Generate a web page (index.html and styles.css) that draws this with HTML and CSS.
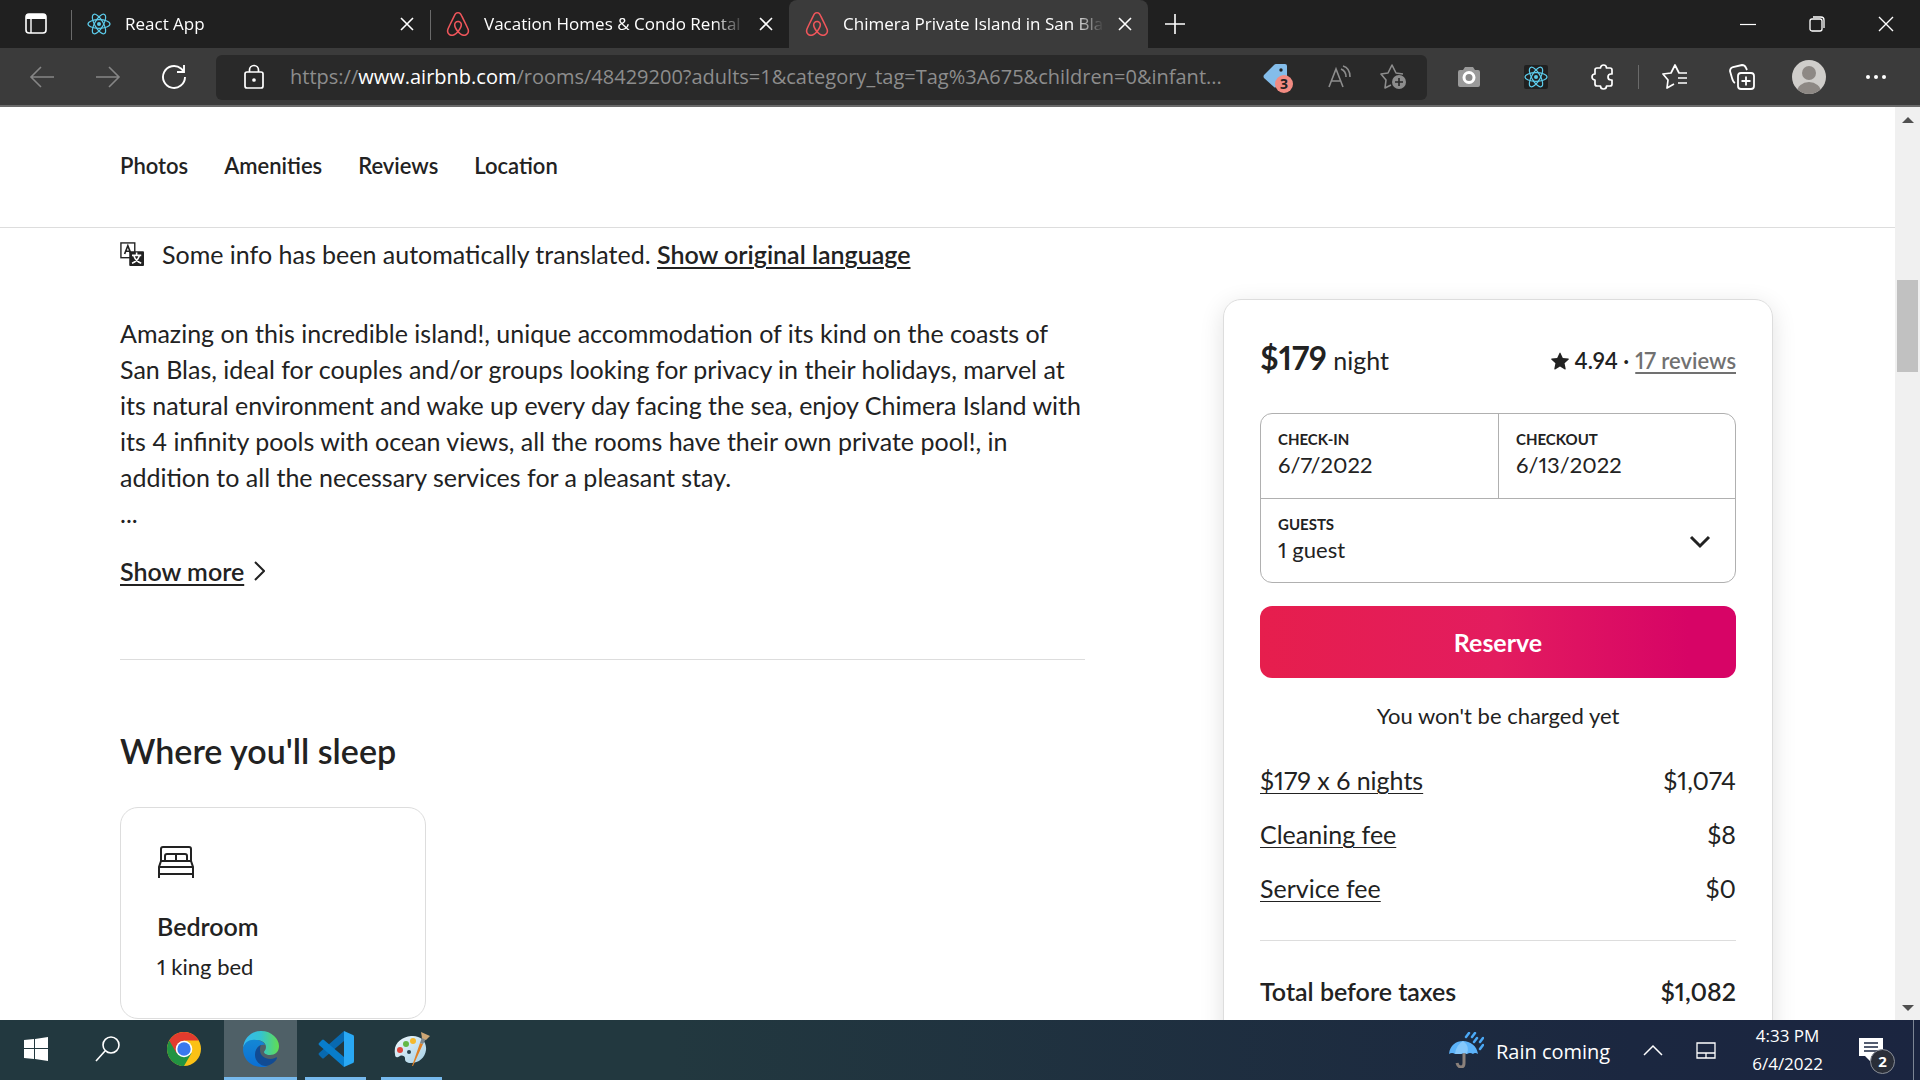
FILE: index.html
```html
<!DOCTYPE html>
<html lang="en">
<head>
<meta charset="utf-8">
<meta name="viewport" content="width=device-width, initial-scale=1">
<title>Chimera Private Island in San Blas</title>
<link rel="stylesheet" href="styles.css">
</head>
<body>
<svg class="symbols" aria-hidden="true">
  <symbol id="react" viewBox="0 0 24 24"><g fill="none" stroke="currentColor" stroke-width="1.2"><ellipse cx="12" cy="12" rx="11" ry="4.3"/><ellipse cx="12" cy="12" rx="11" ry="4.3" transform="rotate(60 12 12)"/><ellipse cx="12" cy="12" rx="11" ry="4.3" transform="rotate(120 12 12)"/></g><circle cx="12" cy="12" r="2" fill="currentColor"/></symbol>
  <symbol id="belo" viewBox="0 0 24 24"><path fill="currentColor" d="M12.001 18.275c-1.353-1.697-2.148-3.184-2.413-4.457-.263-1.027-.16-1.848.291-2.465.477-.71 1.188-1.056 2.121-1.056s1.643.345 2.12 1.063c.446.61.558 1.432.286 2.465-.291 1.298-1.085 2.785-2.412 4.458zm9.601 1.14c-.185 1.246-1.034 2.28-2.2 2.783-2.253.98-4.483-.583-6.392-2.704 3.157-3.951 3.74-7.028 2.385-9.018-.795-1.14-1.933-1.695-3.394-1.695-2.944 0-4.563 2.49-3.927 5.382.37 1.565 1.352 3.343 2.917 5.332-.98 1.085-1.91 1.856-2.732 2.333-.636.344-1.245.558-1.828.609-2.679.399-4.778-2.2-3.825-4.88.132-.345.395-.98.845-1.961l.025-.053c1.464-3.178 3.242-6.79 5.285-10.795l.053-.132.58-1.116c.45-.822.635-1.19 1.351-1.643.346-.21.77-.315 1.246-.315.954 0 1.698.558 2.016 1.007.158.239.345.557.582.953l.558 1.089.08.159c2.041 4.004 3.821 7.608 5.279 10.794l.026.025.533 1.22.318.764c.243.613.294 1.222.213 1.858zm1.22-2.39c-.186-.583-.505-1.271-.9-2.094v-.03c-1.889-4.006-3.642-7.608-5.307-10.844l-.111-.163C15.317 1.461 14.468 0 12.001 0c-2.44 0-3.476 1.695-4.535 3.898l-.081.16c-1.669 3.236-3.421 6.843-5.303 10.847v.053l-.559 1.22c-.21.504-.317.768-.345.847C-.172 20.74 2.611 24 5.98 24c.027 0 .132 0 .265-.027h.372c1.75-.213 3.554-1.325 5.384-3.317 1.829 1.989 3.635 3.104 5.382 3.317h.372c.133.027.239.027.265.027 3.37.003 6.152-3.261 4.802-6.975z"/></symbol>
  <symbol id="close" viewBox="0 0 14 14"><path d="M1 1l12 12M13 1L1 13" fill="none" stroke="currentColor" stroke-width="1.6"/></symbol>
</svg>

<header class="chrome">
  <div class="tabbar">
    <button class="icon-button tab-actions" aria-label="Tab actions"><svg width="22" height="22" viewBox="0 0 22 22"><rect x="1" y="1" width="20" height="19" rx="3" fill="none" stroke="#fff" stroke-width="1.6"/><path d="M1 6V4a3 3 0 0 1 3-3h14a3 3 0 0 1 3 3v2z" fill="#fff"/><path d="M6 6v14" stroke="#fff" stroke-width="1.4"/></svg></button>
    <div class="tab tab-divided">
      <svg class="favicon react-color"><use href="#react"/></svg>
      <span class="tab-title">React App</span>
      <button class="icon-button" aria-label="Close React App"><svg width="14" height="14"><use href="#close"/></svg></button>
    </div>
    <div class="tab tab-divided">
      <svg class="favicon belo-color"><use href="#belo"/></svg>
      <span class="tab-title">Vacation Homes &amp; Condo Rental</span>
      <button class="icon-button" aria-label="Close Vacation Homes"><svg width="14" height="14"><use href="#close"/></svg></button>
    </div>
    <div class="tab tab-active">
      <svg class="favicon belo-color"><use href="#belo"/></svg>
      <span class="tab-title">Chimera Private Island in San Bla</span>
      <button class="icon-button" aria-label="Close Chimera Private Island"><svg width="14" height="14"><use href="#close"/></svg></button>
    </div>
    <button class="icon-button new-tab" aria-label="New tab"><svg width="22" height="22" viewBox="0 0 22 22"><path d="M11 1v20M1 11h20" stroke="#fff" stroke-width="1.6"/></svg></button>
    <div class="window-controls">
      <button class="icon-button" aria-label="Minimize"><svg width="16" height="16"><path d="M0 8.500h16" stroke="#fff" stroke-width="1.2"/></svg></button>
      <button class="icon-button" aria-label="Restore"><svg width="16" height="16" fill="none" stroke="#fff" stroke-width="1.3"><rect x="1" y="3" width="12" height="12" rx="2"/><path d="M4 1h8a3 3 0 0 1 3 3v8"/></svg></button>
      <button class="icon-button" aria-label="Close"><svg width="16" height="16"><path d="M1 1l14 14M15 1L1 15" stroke="#fff" stroke-width="1.4"/></svg></button>
    </div>
  </div>

  <div class="toolbar">
    <div class="nav-buttons">
      <button class="icon-button" aria-label="Back"><svg width="26" height="24" viewBox="0 0 26 24" fill="none" stroke="#868686" stroke-width="1.6"><path d="M25 12H2M12 2L2 12l10 10"/></svg></button>
      <button class="icon-button" aria-label="Forward"><svg width="26" height="24" viewBox="0 0 26 24" fill="none" stroke="#868686" stroke-width="1.6"><path d="M1 12h23M14 2l10 10-10 10"/></svg></button>
      <button class="icon-button" aria-label="Refresh"><svg width="26" height="26" viewBox="0 0 26 26" fill="none" stroke="#fff" stroke-width="1.9"><path d="M24 13a11 11 0 1 1-4-8.500l3 3M23 1v7h-7"/></svg></button>
    </div>
    <div class="address">
      <svg width="20" height="26" viewBox="0 0 20 26" fill="none" stroke="#fff" stroke-width="1.7"><rect x="1" y="8" width="18" height="16" rx="2"/><path d="M5.500 8V6a4.500 4.500 0 0 1 9 0v2"/><circle cx="10" cy="16" r="1" fill="#fff"/></svg>
      <span class="url">https://<b>www.airbnb.com</b>/rooms/48429200?adults=1&amp;category_tag=Tag%3A675&amp;children=0&amp;infant...</span>
      <button class="icon-button shopping" aria-label="Shopping, 3 coupons"><svg width="30" height="28" viewBox="0 0 30 28"><path d="M1 12L11 2q1-1 2-1h9q2 0 2 2v10L13 24q-1 1-2 0L1 15q-1-1.500 0-3z" fill="#84bdea"/><circle cx="18" cy="7" r="1.700" fill="#222"/></svg><span class="coupon-badge">3</span></button>
      <button class="icon-button" aria-label="Read aloud"><svg width="26" height="24" viewBox="0 0 26 24" fill="none" stroke="#8d8d8d" stroke-width="1.6"><path d="M2 22L9 4l7 18M4.500 16h9M14 4q5 2 5 8M16 1q7 2 7 11"/></svg></button>
      <button class="icon-button" aria-label="Add to favorites"><svg width="28" height="26" viewBox="0 0 28 26" fill="none" stroke="#8d8d8d" stroke-width="1.6" stroke-linejoin="round"><path d="M12 21l-6 3 1-8-5-6 7-1 4-8 4 8 7 1"/><circle cx="20" cy="18" r="7" fill="#8d8d8d" stroke="none"/><path d="M20 14v8M16 18h8" stroke="#292929"/></svg></button>
    </div>
    <div class="extensions">
      <button class="icon-button" aria-label="Screenshot extension"><svg width="24" height="22" viewBox="0 0 24 22"><path d="M1 6a2 2 0 0 1 2-2h3l2-3h8l2 3h3a2 2 0 0 1 2 2v13a2 2 0 0 1-2 2H3a2 2 0 0 1-2-2z" fill="#9a9a9a"/><circle cx="12" cy="11.500" r="5" fill="#8a8a8a" stroke="#fff" stroke-width="3"/></svg></button>
      <button class="icon-button" aria-label="React Developer Tools"><svg class="react-tile react-color"><use href="#react"/></svg></button>
      <button class="icon-button" aria-label="Extensions"><svg width="26" height="26" viewBox="0 0 26 26" fill="none" stroke="#fff" stroke-width="1.700" stroke-linejoin="round"><path d="M7 4h3.500a3 3 0 0 1 6 0H20q2 0 2 2v4h-1a3 3 0 0 0 0 6h1v4q0 2-2 2h-3.500a3 3 0 0 1-6 0H7q-2 0-2-2v-4a3 3 0 0 1 0-6V6q0-2 2-2z"/></svg></button>
      <span class="toolbar-divider"></span>
      <button class="icon-button" aria-label="Favorites"><svg width="26" height="26" viewBox="0 0 26 26" fill="none" stroke="#fff" stroke-width="1.700" stroke-linejoin="round"><path d="M12 20l-7 4 1-8-5-6 8-1 4-8 4 8h8M16 14h9M16 19h9"/></svg></button>
      <button class="icon-button" aria-label="Collections"><svg width="26" height="26" viewBox="0 0 26 26" fill="none" stroke="#fff" stroke-width="1.800"><rect x="9" y="9" width="16" height="16" rx="3"/><path d="M17 12.500v9M12.500 17h9M6 19q-2-1-3-5L1 7q0-3 3-4l9-2q3 0 4 3l1 2"/></svg></button>
      <button class="icon-button" aria-label="Profile"><svg width="34" height="34" viewBox="0 0 34 34"><clipPath id="round"><circle cx="17" cy="17" r="17"/></clipPath><g clip-path="url(#round)"><path d="M0 0h34v34H0z" fill="#cfcdca"/><circle cx="17" cy="13" r="7" fill="#8d8884"/><ellipse cx="17" cy="32" rx="12" ry="10" fill="#8d8884"/></g></svg></button>
      <button class="icon-button" aria-label="Settings and more"><svg width="22" height="6" fill="#fff"><circle cx="3" cy="3" r="2"/><circle cx="11" cy="3" r="2"/><circle cx="19" cy="3" r="2"/></svg></button>
    </div>
  </div>
</header>

<div class="viewport">
  <div class="page">
    <nav class="sections">
      <a href="#photos">Photos</a>
      <a href="#amenities">Amenities</a>
      <a href="#reviews">Reviews</a>
      <a href="#location">Location</a>
    </nav>
    <main class="listing">
      <div class="details">
        <p class="translated">
          <svg width="24" height="24" viewBox="0 0 26 26"><rect x="1" y="1" width="15" height="16" fill="#fff" stroke="#222" stroke-width="1.500"/><path d="M5 13l3.500-9L12 13M6 10h5" fill="none" stroke="#222" stroke-width="1.800"/><rect x="10" y="10" width="16" height="16" rx="1" fill="#222"/><path d="M18 11.500v2.500M13 14.500h10M15 15q2 6 8 8M21 15q-2 6-8 8" fill="none" stroke="#fff" stroke-width="1.700"/></svg>
          <span>Some info has been automatically translated. <button class="link-button">Show original language</button></span>
        </p>
        <p class="description">Amazing on this incredible island!, unique accommodation of its kind on the coasts of<br>San Blas, ideal for couples and/or groups looking for privacy in their holidays, marvel at<br>its natural environment and wake up every day facing the sea, enjoy Chimera Island with<br>its 4 infinity pools with ocean views, all the rooms have their own private pool!, in<br>addition to all the necessary services for a pleasant stay.<br>...</p>
        <div class="more"><button class="link-button">Show more</button><svg width="11" height="20" viewBox="0 0 11 20"><path d="M1 1l9 9-9 9" fill="none" stroke="#222" stroke-width="2"/></svg></div>
        <section class="sleep">
          <h2>Where you'll sleep</h2>
          <article class="room">
            <svg width="38" height="34" viewBox="0 0 38 34" fill="none" stroke="#222" stroke-width="2"><path d="M4 16V4q0-2 2-2h26q2 0 2 2v12M8 16v-5q0-2 2-2h18q2 0 2 2v5M19 9v7M4 16h30l2 6v11M4 16l-2 6v11M2 22h34M2 29h34"/></svg>
            <h3>Bedroom</h3>
            <p>1 king bed</p>
          </article>
        </section>
      </div>

      <aside class="booking">
        <div class="booking-head">
          <p class="price"><strong>$179</strong> night</p>
          <p class="rating"><svg width="18" height="18" viewBox="0 0 32 32"><path fill="#222" d="M15.094 1.579l-4.124 8.885-9.86 1.270a1 1 0 0 0-.542 1.736l7.293 6.565-1.965 9.852a1 1 0 0 0 1.483 1.061L16 25.951l8.625 4.997a1 1 0 0 0 1.482-1.060l-1.965-9.853 7.293-6.565a1 1 0 0 0-.541-1.735l-9.860-1.271-4.127-8.885a1 1 0 0 0-1.814 0z"/></svg><span>4.94 ·</span><a href="#reviews">17 reviews</a></p>
        </div>
        <div class="trip">
          <button class="field"><span class="field-label">CHECK-IN</span><span>6/7/2022</span></button>
          <button class="field field-end"><span class="field-label">CHECKOUT</span><span>6/13/2022</span></button>
          <button class="field field-guests"><span class="field-label">GUESTS</span><span>1 guest</span><svg width="22" height="14" viewBox="0 0 22 14"><path d="M2 2l9 9 9-9" fill="none" stroke="#222" stroke-width="3"/></svg></button>
        </div>
        <button class="reserve">Reserve</button>
        <p class="note">You won't be charged yet</p>
        <dl class="costs">
          <div><dt><button>$179 x 6 nights</button></dt><dd>$1,074</dd></div>
          <div><dt><button>Cleaning fee</button></dt><dd>$8</dd></div>
          <div><dt><button>Service fee</button></dt><dd>$0</dd></div>
          <div class="total"><dt>Total before taxes</dt><dd>$1,082</dd></div>
        </dl>
      </aside>
    </main>
  </div>
  <div class="scrollbar" aria-hidden="true">
    <svg width="12" height="6"><path d="M0 6l6-6 6 6z" fill="#505050"/></svg>
    <div class="track"><div class="thumb"></div></div>
    <svg width="12" height="6"><path d="M0 0l6 6 6-6z" fill="#505050"/></svg>
  </div>
</div>

<footer class="taskbar">
  <div class="apps">
    <button class="app" aria-label="Start"><svg width="24" height="24" viewBox="0 0 24 24" fill="#fff"><path d="M0 3l10-1v9H0zM11 2l13-2v11H11zM0 12h10v10L0 21zM11 12h13v12l-13-2z"/></svg></button>
    <button class="app" aria-label="Search"><svg width="26" height="26" viewBox="0 0 26 26" fill="none" stroke="#fff" stroke-width="1.600"><circle cx="16" cy="9" r="8"/><path d="M10 15L1 25"/></svg></button>
    <button class="app app-chrome" aria-label="Chrome"><svg width="34" height="34" viewBox="0 0 34 34"><circle cx="17" cy="17" r="17" fill="#fbc116"/><path d="M17 17L2.300 8.500A17 17 0 0 0 17 34l7.400-12.800z" fill="#229342"/><path d="M2.300 8.500A17 17 0 0 1 31.700 8.500H17v8.500l-7.400 4.300z" fill="#e33b2e"/><circle cx="17" cy="17" r="8.300" fill="#fff"/><circle cx="17" cy="17" r="6.700" fill="#3a78ee"/></svg></button>
    <button class="app app-active" aria-label="Edge"><svg width="36" height="36" viewBox="0 0 36 36"><defs><linearGradient id="edge-top"><stop offset="0" stop-color="#35b8f0"/><stop offset=".5" stop-color="#35c3cf"/><stop offset="1" stop-color="#61de50"/></linearGradient><linearGradient id="edge-body" x2="0" y2="1"><stop offset="0" stop-color="#1487d4"/><stop offset="1" stop-color="#0b6fd4"/></linearGradient></defs><path d="M0 17C1 6 9 0 18 0c11 0 18 8 18 15 0 6-4 9-9 9-4 0-6-2-6-3s2-2 2-5c0-4-4-7-10-7C7 9 2 12 0 17z" fill="url(#edge-top)"/><path d="M0 18C1 11 7 8 13 9c4 0 8 2 9 5-5-1-9 2-9 8 0 7 6 13 12 13-2 1-5 1-7 1C8 36 0 28 0 18z" fill="url(#edge-body)"/><path d="M18 14c-4 2-6 5-6 10 0 6 5 11 11 11 6-1 10-5 11-8 0-1-1-1-2 0-7 3-15-1-15-8 0-2 0-3 1-5z" fill="#114b93"/></svg></button>
    <button class="app app-open" aria-label="Visual Studio Code"><svg width="36" height="36" viewBox="0 0 36 36"><path d="M26 0v10L6 27q-1 1-2 0l-3-3q-1-1 0-2z" fill="#0869b0"/><path d="M1 14q-1-1 0-2l3-3q1-1 2 0l20 17v10z" fill="#087dcb"/><path d="M26 0l9 4q1 0 1 2v24q0 2-1 2l-9 4z" fill="#29a8f4"/></svg></button>
    <button class="app app-open" aria-label="Paint"><svg width="36" height="36" viewBox="0 0 36 36"><defs><linearGradient id="palette" x2="1" y2="1"><stop offset="0" stop-color="#f0f8fc"/><stop offset="1" stop-color="#a5d0e6"/></linearGradient></defs><path d="M17 5c9-1 16 5 15 14-1 8-8 14-17 13-4-1-4-3-4-5s-3-3-5-2c-3 2-5 2-5-2C-1 12 8 6 17 5z" fill="url(#palette)"/><circle cx="6" cy="19" r="3" fill="#e0463d"/><circle cx="12" cy="13" r="3" fill="#62b846"/><circle cx="19" cy="10" r="3" fill="#f5b92c"/><circle cx="15" cy="21" r="2" fill="#27414e"/><path d="M26 12l3 1-10 22h-1z" fill="#e08024"/><path d="M26 12l2-6 4 2-3 5z" fill="#7e878c"/><path d="M28 7l-1-6 9 4-4 4z" fill="#cda675"/></svg></button>
  </div>
  <div class="tray">
    <button class="weather"><svg width="36" height="36" viewBox="0 0 36 36"><path d="M16 18v13q0 4-3 4t-4-4" fill="none" stroke="#8b817b" stroke-width="3"/><path d="M1 22C2 13 8 9 15 9s14 5 15 13q-3-2-5 0-3-2-6 0-3-2-6 0-3-2-6 0-3-2-6 0z" fill="#5cb3fa"/><path d="M7 22q1-9 8-13 7 5 4 13-3-2-6 0z" fill="#85c8fc"/><path d="M21 1l-3 4M27 1l-3 4M29 6l-3 4M35 6l-3 4M35 13l-3 4" stroke="#4ba8f5" stroke-width="2.500" stroke-linecap="round"/></svg><span>Rain coming</span></button>
    <button class="icon-button" aria-label="Hidden icons"><svg width="20" height="12"><path d="M1 11l9-9 9 9" fill="none" stroke="#fff" stroke-width="1.500"/></svg></button>
    <button class="icon-button" aria-label="Touchpad"><svg width="20" height="17"><path d="M1 1h18v15H1zM1 11h18M10 11v5" fill="none" stroke="#fff" stroke-width="1.300"/></svg></button>
    <button class="clock"><span>4:33 PM</span><span>6/4/2022</span></button>
    <button class="icon-button notifications" aria-label="2 notifications"><svg width="24" height="24"><path d="M0 0h24v18H12v6l-6-6H0z" fill="#fff"/><path d="M5 5h14M5 9h14M5 13h14" stroke="#1b2740" stroke-width="1.300"/></svg><span class="count">2</span></button>
  </div>
</footer>
</body>
</html>
```
FILE: styles.css
```css
* { box-sizing: border-box; }

body {
  margin: 0;
  height: 100vh;
  display: flex;
  flex-direction: column;
  overflow: hidden;
  font-family: Lato, "Liberation Sans", sans-serif;
  color: #222;
  background: #fff;
}

p, h2, h3, dl, dd { margin: 0; }
svg { flex: none; display: block; }
button { font: inherit; color: inherit; background: none; border: 0; padding: 0; text-align: left; }
a { color: inherit; }

.symbols { position: absolute; width: 0; height: 0; }
.icon-button { display: flex; align-items: center; justify-content: center; flex: none; }

/* Browser frame */
.chrome { flex: none; font-family: "Open Sans", sans-serif; color: #fff; border-bottom: 2px solid #6a6a6a; }
.tabbar { display: flex; height: 48px; background: #202020; }
.tab-actions { width: 71px; }
.tab { display: flex; align-items: center; gap: 14px; width: 359px; padding: 0 16px; position: relative; }
.tab-divided::before { content: ""; position: absolute; left: 0; top: 10px; bottom: 8px; width: 1px; background: #6a6a6a; }
.tab-active { background: #3b3b3b; border-radius: 8px 8px 0 0; }
.tab-title { flex: 1; overflow: hidden; white-space: nowrap; font-size: 17px; line-height: 24px; mask-image: linear-gradient(to right, #000 88%, transparent); }
.favicon { width: 24px; height: 24px; }
.react-color { color: #5ccbea; }
.belo-color { color: #f0565b; }
.new-tab { width: 54px; }
.window-controls { display: flex; margin-left: auto; }
.window-controls .icon-button { width: 69px; }

.toolbar { display: flex; align-items: center; height: 57px; background: #3b3b3b; }
.nav-buttons { display: flex; gap: 40px; padding: 0 29px 0 29px; }
.address { flex: 1; min-width: 0; display: flex; align-items: center; gap: 26px; height: 45px; margin-top: 1px; padding: 0 20px 0 28px; background: #292929; border-radius: 6px; }
.url { flex: 1; min-width: 0; overflow: hidden; white-space: nowrap; font-size: 20px; line-height: 28px; color: #8d8d8d; }
.url b { font-weight: 400; color: #fff; }
.shopping { position: relative; margin-right: 8px; }
.coupon-badge { position: absolute; right: 0; bottom: -2px; width: 18px; height: 18px; border-radius: 50%; background: #f28b82; color: #222; font-size: 14px; font-weight: 700; line-height: 18px; text-align: center; }
.extensions { display: flex; align-items: center; width: 493px; padding-left: 8px; }
.extensions .icon-button { width: 67px; }
.react-tile { width: 24px; height: 24px; background: #202020; border-radius: 2px; }
.toolbar-divider { width: 1px; height: 24px; margin: 0 2px; background: #6a6a6a; }

/* Page area */
.viewport { flex: 1; min-height: 0; display: flex; }
.page { flex: 1; min-width: 0; overflow: hidden; font-variant-numeric: proportional-nums; }
.scrollbar { display: flex; flex-direction: column; align-items: center; width: 25px; padding: 10px 0 9px; background: #f0f0f0; }
.track { flex: 1; width: 21px; padding-top: 157px; }
.thumb { height: 92px; background: #c1c1c1; }

.sections { display: flex; align-items: center; gap: 36px; height: 121px; padding: 0 120px 4px; border-bottom: 1px solid #ddd; font-size: 22px; font-weight: 600; }
.sections a { text-decoration: none; }

.listing { display: grid; grid-template-columns: 965fr 550fr; column-gap: 138px; align-items: start; padding: 0 122px 0 120px; font-size: 25px; line-height: 36px; }
.translated { display: flex; align-items: center; gap: 18px; padding-top: 8px; }
.description { padding-top: 43px; white-space: nowrap; }
.link-button { font-weight: 600; text-decoration: underline; text-decoration-thickness: 2px; text-underline-offset: 3px; }
.more { display: flex; align-items: center; gap: 10px; padding: 22px 0 70px; }
.sleep { border-top: 1px solid #ddd; padding-top: 70px; }
.sleep h2 { font-size: 34px; line-height: 42px; font-weight: 600; }
.room { width: 306px; margin-top: 35px; padding: 37px 36px 36px; border: 1px solid #ddd; border-radius: 18px; }
.room h3 { margin-top: 29px; font-size: 25px; line-height: 36px; font-weight: 600; }
.room p { margin-top: 8px; font-size: 22px; line-height: 30px; }

/* Booking card */
.booking { margin-top: 71px; padding: 36px; border: 1px solid #ddd; border-radius: 18px; box-shadow: 0 6px 24px rgba(0, 0, 0, 0.12); }
.booking-head { display: flex; justify-content: space-between; align-items: baseline; padding-bottom: 30px; line-height: 44px; }
.price strong { font-size: 32px; font-weight: 700; }
.rating { display: flex; align-items: center; gap: 6px; font-size: 22px; font-weight: 600; }
.rating a { color: #717171; text-underline-offset: 3px; text-decoration-thickness: 2px; }
.trip { display: grid; grid-template-columns: 1fr 1fr; border: 1px solid #b0b0b0; border-radius: 12px; }
.field { display: flex; flex-direction: column; height: 84px; padding: 13px 17px; font-size: 22px; line-height: 28px; }
.field-label { font-size: 15px; line-height: 24px; font-weight: 700; }
.field-end { border-left: 1px solid #b0b0b0; }
.field-guests { grid-column: 1 / 3; position: relative; border-top: 1px solid #b0b0b0; }
.field-guests svg { position: absolute; right: 24px; top: 36px; }
.reserve { display: block; width: 100%; height: 72px; margin-top: 23px; border-radius: 12px; background: linear-gradient(to right, #e61e4d 0%, #e31c5f 50%, #d70466 90%); color: #fff; font-weight: 700; text-align: center; }
.note { padding-top: 20px; font-size: 22px; text-align: center; }
.costs { padding-top: 28px; }
.costs div { display: flex; justify-content: space-between; padding-bottom: 18px; }
.costs button { text-decoration: underline; text-decoration-thickness: 1px; text-underline-offset: 3px; }
.costs .total { margin-top: 16px; padding-top: 32px; border-top: 1px solid #ddd; font-weight: 600; }

/* Taskbar */
.taskbar { flex: none; display: flex; justify-content: space-between; height: 60px; background: linear-gradient(to right, #22383f 0%, #22383f 35%, #1b2740 85%, #1b2540 100%); color: #fff; font-family: "Open Sans", sans-serif; }
.apps { display: flex; }
.app { display: flex; align-items: center; justify-content: center; width: 72px; border-bottom: 3px solid transparent; }
.app-chrome { width: 80px; }
.app-active { background: #4f6067; border-color: #76b9ed; width: 73px; }
.app-open { width: 61px; margin: 0 7px 0 8px; border-color: #76b9ed; }
.tray { display: flex; align-items: center; gap: 33px; padding-right: 30px; border-right: 1px solid #7c8594; margin-right: 6px; }
.weather { display: flex; align-items: center; gap: 12px; font-size: 20px; line-height: 28px; }
.weather span { padding-top: 4px; }
.clock { display: flex; flex-direction: column; align-items: center; margin: 0 3px; font-size: 17px; line-height: 28px; }
.notifications { position: relative; }
.count { position: absolute; left: 11px; top: 11px; width: 25px; height: 25px; border: 1px solid #8a8f98; border-radius: 50%; background: #2a2e38; font-size: 15px; font-weight: 700; line-height: 23px; text-align: center; }
```
